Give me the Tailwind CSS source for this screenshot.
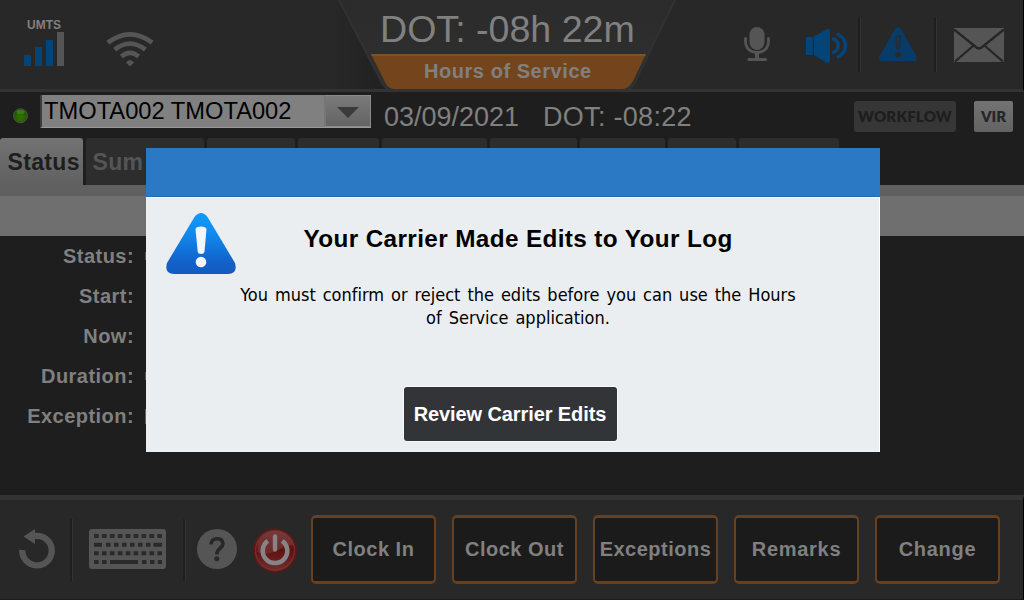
<!DOCTYPE html>
<html lang="en">
<head>
<meta charset="utf-8">
<title>Hours of Service</title>
<script src="https://cdn.jsdelivr.net/npm/@tailwindcss/browser@4"></script>
</head>
<body class="bg-[#1e1e1e]">
<div class="relative flex h-[600px] w-[1024px] flex-col overflow-hidden bg-[#1e1e1e] font-['Liberation_Sans',Arial,sans-serif] text-[#808080]">

  <!-- Top bar -->
  <header class="relative flex h-[92px] shrink-0 items-start border-b-[3px] border-r border-b-[#333333] border-r-black bg-[#282828]">
    <div class="ml-[23px] mt-[19px] flex w-[42px] flex-col items-center">
      <span class="text-[12px] font-bold leading-[13px]">UMTS</span>
      <svg class="block" width="42" height="34" viewBox="0 0 42 34"><g fill="#034479"><rect x="1" y="23" width="7" height="11"/><rect x="12" y="15" width="7" height="19"/><rect x="23" y="8" width="7" height="26"/></g><rect x="34" y="0" width="7" height="34" fill="#555"/></svg>
    </div>
    <svg class="ml-[41px] mt-[31px] block" width="48" height="36" viewBox="0 0 48 36" fill="none" stroke="#555" stroke-width="4.6"><path d="M1.800 11.600Q24-5 46.200 11.600"/><path d="M8.600 18.600Q24 6.500 39.400 18.600"/><path d="M15.300 25.600Q24 18 32.700 25.600"/><path d="M20 31.500Q24 26.500 28 31.500L24 35.500Z" fill="#555" stroke="none"/></svg>

    <!-- Title plate -->
    <div class="absolute left-[330px] top-0 h-[90px] w-[354px]">
      <svg class="absolute left-0 top-0 block" width="354" height="92" viewBox="0 0 354 92">
        <defs><linearGradient id="plate" x1="0" y1="0" x2="0" y2="1"><stop offset="0" stop-color="#2b2b2b"/><stop offset="1" stop-color="#303030"/></linearGradient>
        <linearGradient id="shl" x1="0" x2="1"><stop offset="0" stop-color="#222" stop-opacity="0"/><stop offset="1" stop-color="#202020"/></linearGradient></defs>
        <path d="M0 0H9L56 89H0Z" fill="url(#shl)"/>
        <path d="M8 -2H346L305 82Q301 90 294 90H62Q56 90 52 83Z" fill="url(#plate)" stroke="#323232" stroke-width="2"/>
        <path d="M41 54H316L303.500 80Q299 89 292 89H64Q58 89 55 82Z" fill="#74451d"/>
        <path d="M41 54H316L315.200 56H42Z" fill="#7c5229"/>
      </svg>
      <div class="relative pl-[50px] pt-[8px] text-[37.600px] leading-[43px] whitespace-nowrap">DOT: -08h 22m</div>
      <div class="relative pl-[94px] pt-[8px] text-[20px] font-bold leading-[24px] tracking-[0.55px] whitespace-nowrap">Hours of Service</div>
    </div>

    <svg class="ml-[590px] mt-[27px] block" width="26" height="34" viewBox="0 0 26 34"><rect x="5.500" y="0" width="15" height="23" rx="7.500" fill="#555"/><path d="M1.500 11.500V14C1.500 21.500 6.500 25.500 13 25.500S24.500 21.500 24.500 14V11.500" fill="none" stroke="#555" stroke-width="2.800" stroke-linecap="round"/><path d="M11 25h4v6h-4z" fill="#555"/><rect x="3.500" y="31" width="19.500" height="3" rx="1.500" fill="#555"/></svg>
    <svg class="ml-[36px] mt-[28px] block" width="43" height="36" viewBox="0 0 43 36"><path d="M0 9H6.800V27H0ZM8 8.500L20 1.500Q24 -.5 24 4V32Q24 36 20 34.500L8 27Z" fill="#034479"/><g fill="none" stroke="#034479" stroke-width="3.500" stroke-linecap="round"><path d="M27.500 11C33.800 13.500 33.800 22 27.500 24.500"/><path d="M32 6.500C42 11.500 42 24 32 29"/></g></svg>
    <div class="ml-[9px] mt-[17px] h-[55px] w-[3px] border-l-2 border-r border-l-[#1f1f1f] border-r-[#333]"></div>
    <svg class="ml-[18px] mt-[27px] block" width="38" height="34" viewBox="0 0 38 34"><path d="M16 1.800Q19-1.500 22 1.800L37.500 29Q39 34 34.500 34H3.500Q-1 34 .5 29Z" fill="#0a3a66"/><path d="M16.300 8.500h5.400l-1.200 14h-3z" fill="#0a3a66"/><path d="M17 9l1 13M21.300 9l-1 13" stroke="#262c33" stroke-width="1.600"/><path d="M16.500 9h5.400" stroke="#262c33" stroke-width="1"/><circle cx="19" cy="27.500" r="2.700" fill="#262a30"/></svg>
    <div class="ml-[17px] mt-[17px] h-[55px] w-[3px] border-l-2 border-r border-l-[#1f1f1f] border-r-[#333]"></div>
    <svg class="ml-[17px] mt-[28px] block" width="50" height="34" viewBox="0 0 50 34"><path fill="#555" d="M0 0H50V34H0Z"/><path d="M0 1.500L22.500 19.500Q25 21.500 27.500 19.500L50 1.500M1 33.500L19 18M49 33.500L31 18" fill="none" stroke="#262626" stroke-width="2.300"/></svg>
  </header>

  <!-- Driver row -->
  <section class="flex h-[46px] shrink-0 items-start">
    <svg class="ml-[12px] mt-[15px] block" width="17" height="17" viewBox="0 0 17 17"><defs><radialGradient id="led" cx=".5" cy=".6" r=".5"><stop offset="0" stop-color="#2f7500"/><stop offset="1" stop-color="#245600"/></radialGradient></defs><circle cx="8.500" cy="8.800" r="7" fill="url(#led)" stroke="#4b5346" stroke-width="1"/><ellipse cx="8.500" cy="5" rx="4" ry="2" fill="#3d7a1a"/></svg>
    <div class="ml-[11px] mt-[3px] flex h-[33px] w-[331px] border-b border-l-2 border-b-[#999] border-l-[#3c3c3c] bg-[#808080]">
      <div class="w-[282px] pl-[2px] text-[23.700px] leading-[33px] text-black whitespace-nowrap">TMOTA002 TMOTA002</div>
      <div class="flex flex-1 items-start justify-center border-l-2 border-r border-t border-b border-[#8a8a8a] border-l-[#767676] bg-linear-to-b from-[#7a7a7a] to-[#646464] pt-[11px]"><svg width="22" height="11" viewBox="0 0 22 11"><path d="M0 0H22L11 11Z" fill="#3b3b3b"/></svg></div>
    </div>
    <div class="ml-[13px] mt-[9px] w-[159px] text-[27px] leading-[32px] whitespace-nowrap">03/09/2021</div>
    <div class="mt-[9px] w-[311px] text-[27px] leading-[32px] tracking-[0.3px] whitespace-nowrap">DOT: -08:22</div>
    <div class="mt-[9px] h-[31px] w-[102px] rounded-[3px] bg-[#363636] text-center font-['Lato',sans-serif] text-[15px] font-extrabold leading-[31px] tracking-[0.2px] text-[#1e1e1e]">WORKFLOW</div>
    <div class="ml-[18px] mt-[9px] h-[31px] w-[39px] rounded-[2px] bg-linear-to-b from-[#737373] to-[#636363] text-center font-['Lato',sans-serif] text-[15px] font-extrabold leading-[31px] text-[#262626]">VIR</div>
  </section>

  <!-- Tabs -->
  <nav class="flex h-[47px] shrink-0 gap-[3px] text-[23px] font-bold leading-[49px]">
    <div class="w-[83px] rounded-t-[3px] bg-linear-to-b from-[#737373] to-[#606060] pl-[7.500px] tracking-[0.35px] text-[#1e1e1e]">Status</div>
    <div class="w-[118px] rounded-t-[3px] bg-[#2d2d2d] pl-[6.500px] tracking-[0.3px] text-[#555]">Sum</div>
    <div class="w-[88px] rounded-t-[3px] bg-[#2d2d2d]"></div>
    <div class="w-[81px] rounded-t-[3px] bg-[#2d2d2d]"></div>
    <div class="w-[105px] rounded-t-[3px] bg-[#2d2d2d]"></div>
    <div class="w-[87px] rounded-t-[3px] bg-[#2d2d2d]"></div>
    <div class="w-[85px] rounded-t-[3px] bg-[#2d2d2d]"></div>
    <div class="w-[68px] rounded-t-[3px] bg-[#2d2d2d]"></div>
    <div class="w-[100px] rounded-t-[3px] bg-[#2d2d2d]"></div>
  </nav>
  <div class="h-[11px] shrink-0 bg-[#606060]"></div>
  <div class="h-[40px] shrink-0 bg-[#6f6f6f]"></div>

  <!-- Status details -->
  <main class="flex h-[259px] shrink-0 flex-col text-[20px] font-bold leading-[40px] tracking-[0.45px]">
    <div class="flex h-[40px] items-center"><span class="w-[134px] text-right">Status:</span><span class="ml-[11px] h-[8px] w-[1px] bg-[#555]"></span></div>
    <div class="flex h-[40px] items-center"><span class="w-[134px] text-right">Start:</span></div>
    <div class="flex h-[40px] items-center"><span class="w-[134px] text-right">Now:</span></div>
    <div class="flex h-[40px] items-center"><span class="w-[134px] text-right">Duration:</span><span class="ml-[11px] h-[8px] w-[1px] bg-[#555]"></span></div>
    <div class="flex h-[40px] items-center"><span class="w-[134px] text-right">Exception:</span><span class="ml-[11px] h-[15px] w-[1px] bg-[#606060]"></span></div>
  </main>

  <!-- Bottom bar -->
  <footer class="flex h-[105px] shrink-0 items-start border-b border-r border-t-[5px] border-b-[#1b1b1b] border-r-black border-t-[#333] bg-[#282828]">
    <svg class="ml-[19px] mt-[29px] block" width="36" height="40" viewBox="0 0 36 40"><path d="M3.200 21A14.800 14.800 0 1 0 18 6.800H13" fill="none" stroke="#555" stroke-width="6.300"/><path d="M4.500 7.500L16 0V15Z" fill="#555"/></svg>
    <div class="ml-[15px] mt-[19px] h-[62px] w-[3px] border-l-2 border-r border-l-[#1f1f1f] border-r-[#333]"></div>
    <svg class="ml-[16px] mt-[29px] block" width="77" height="40" viewBox="0 0 77 40"><rect width="77" height="40" rx="3" fill="#555"/><g fill="none" stroke="#2a2a2a" stroke-width="4"><path d="M5 7H73" stroke-dasharray="4.700 3.220"/><path d="M5 24.300H73" stroke-dasharray="4.700 3.220"/><path d="M5 33H9.700M13 33H17.700M21 33H49M53 33H57.500M61 33H65.500M68.700 33H73M5 15.800H13M17 15.800H21.500M25 15.800H29.500M33 15.800H37.500M41 15.800H45.500M49 15.800H53.500M57 15.800H61.500M64.500 15.800H73"/></g></svg>
    <div class="ml-[17px] mt-[19px] h-[62px] w-[3px] border-l-2 border-r border-l-[#1f1f1f] border-r-[#333]"></div>
    <svg class="ml-[11px] mt-[29px] block" width="40" height="40" viewBox="0 0 40 40"><circle cx="20" cy="20" r="20" fill="#555"/><path d="M14 15.500C14 8 26 8 26 14.500C26 19.500 19.800 19 19.800 25.500" fill="none" stroke="#282828" stroke-width="3.700"/><circle cx="19.800" cy="29.700" r="2.500" fill="#282828"/></svg>
    <svg class="ml-[16px] mt-[28px] block" width="44" height="45" viewBox="0 0 44 45"><defs><linearGradient id="pw" x1="0" y1="0" x2="0" y2="1"><stop offset="0" stop-color="#6b2c2c"/><stop offset=".5" stop-color="#621010"/><stop offset="1" stop-color="#703030"/></linearGradient></defs><circle cx="22" cy="22.500" r="21.200" fill="url(#pw)" stroke="#5f1714" stroke-width="1.500"/><circle cx="22" cy="22.500" r="19.500" fill="none" stroke="#743636" stroke-width="1"/><path d="M5 14A19 19 0 0 1 40.500 17Q32 17 27 21Q16 28 4 24Z" fill="#855050" opacity=".4"/><path d="M14.800 12.800A12.300 12.300 0 1 0 29.200 12.800" fill="none" stroke="#858585" stroke-width="4.600"/><path d="M22 8.500V21.500" stroke="#858585" stroke-width="4.400" stroke-linecap="round"/></svg>
    <div class="ml-[14px] mt-[15px] flex gap-[16px] text-[20px] font-bold leading-[63px] tracking-[0.5px]">
      <div class="flex h-[69px] w-[125px] justify-center rounded-[5px] border-x-2 border-y-[3px] border-[#66401f] bg-[#1b1b1b]">Clock In</div>
      <div class="flex h-[69px] w-[125px] justify-center rounded-[5px] border-x-2 border-y-[3px] border-[#66401f] bg-[#1b1b1b]">Clock Out</div>
      <div class="flex h-[69px] w-[125px] justify-center rounded-[5px] border-x-2 border-y-[3px] border-[#66401f] bg-[#1b1b1b]">Exceptions</div>
      <div class="flex h-[69px] w-[125px] justify-center rounded-[5px] border-x-2 border-y-[3px] border-[#66401f] bg-[#1b1b1b] tracking-[0.7px]">Remarks</div>
      <div class="flex h-[69px] w-[125px] justify-center rounded-[5px] border-x-2 border-y-[3px] border-[#66401f] bg-[#1b1b1b] tracking-[0.7px]">Change</div>
    </div>
  </footer>

  <!-- Dialog -->
  <div class="absolute left-[146px] top-[148px] flex h-[304px] w-[734px] flex-col bg-[#eaeef1] text-black">
    <div class="h-[49px] shrink-0 border-b border-[#2569b0] bg-[#2b79c5]"></div>
    <div class="relative flex flex-1 flex-col border-r border-t border-white">
      <svg class="absolute left-[20px] top-[15px] block" width="70" height="62" viewBox="0 0 70 62"><defs><linearGradient id="warn" x1="0" y1="0" x2="0" y2="1"><stop offset="0" stop-color="#119bfb"/><stop offset=".35" stop-color="#1189ee"/><stop offset=".8" stop-color="#1262ca"/><stop offset="1" stop-color="#125bc2"/></linearGradient></defs><path d="M28.500 4Q35-4 41.500 4L69 50Q72 61 62 61H8Q-2 61 1 50Z" fill="url(#warn)"/><path d="M29.500 16Q30 13.500 35 13.500T40.500 16L38.500 38.500Q38 41 35 41T31.700 38.500Z" fill="#f4f6fa"/><circle cx="35" cy="49" r="5.300" fill="#f4f6fa"/></svg>
      <h1 class="mt-[27px] pl-[157.500px] text-[24.300px] font-bold leading-[28px] tracking-[0.38px] whitespace-nowrap">Your Carrier Made Edits to Your Log</h1>
      <p class="ml-[72px] mt-[30px] w-[600px] text-center font-['DejaVu_Sans_Condensed','DejaVu_Sans',sans-serif] text-[18px] leading-[23px] [font-stretch:condensed] [font-variant-ligatures:none] [word-spacing:1.8px]">You must confirm or reject the edits before you can use the Hours<br>of Service application.</p>
      <button class="ml-[258px] mt-[58px] h-[54px] w-[213px] rounded-[3px] bg-[#333438] pr-[1px] text-[20px] font-bold leading-[54px] tracking-[-0.1px] text-white shadow-[0_0_0_1px_#f6f8fa] whitespace-nowrap">Review Carrier Edits</button>
    </div>
  </div>
</div>
</body>
</html>
